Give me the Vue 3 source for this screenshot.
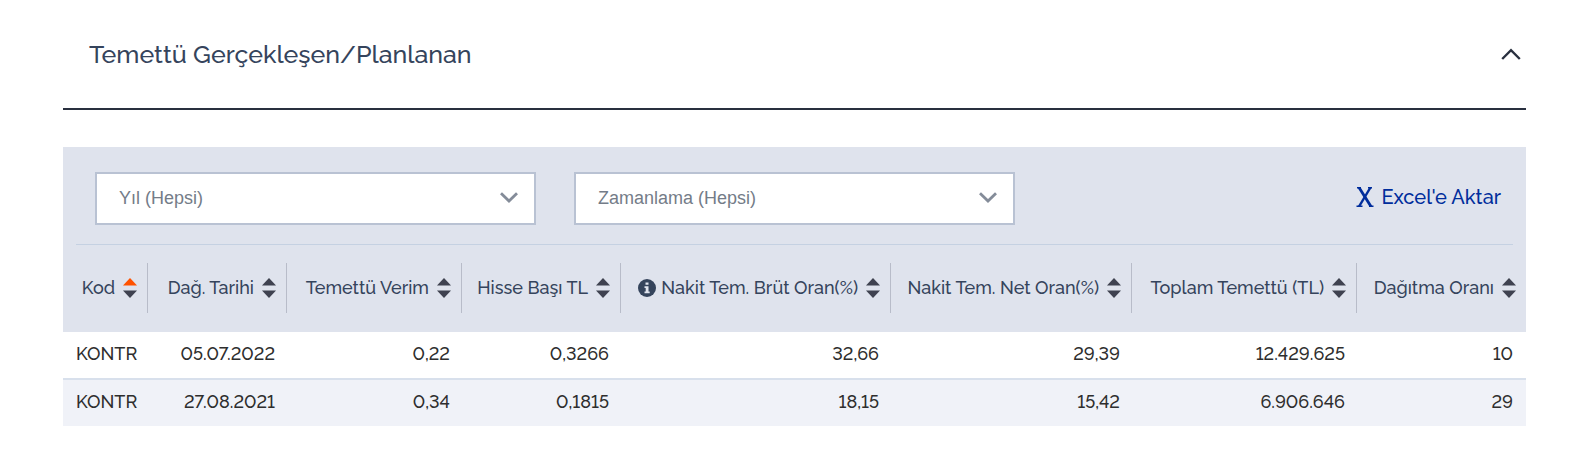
<script setup>
import { ref, computed } from 'vue'

const open = ref(true)
const year = ref('')
const timing = ref('')
const sortKey = ref('code')
const sortAsc = ref(true)

const columns = [
  { key: 'code', label: 'Kod' },
  { key: 'date', label: 'Dağ. Tarihi' },
  { key: 'yield', label: 'Temettü Verim' },
  { key: 'perShare', label: 'Hisse Başı TL' },
  { key: 'gross', label: 'Nakit Tem. Brüt Oran(%)', info: true },
  { key: 'net', label: 'Nakit Tem. Net Oran(%)' },
  { key: 'total', label: 'Toplam Temettü (TL)' },
  { key: 'payout', label: 'Dağıtma Oranı' },
]

const rows = [
  { code: 'KONTR', date: '05.07.2022', yield: '0,22', perShare: '0,3266', gross: '32,66', net: '29,39', total: '12.429.625', payout: '10' },
  { code: 'KONTR', date: '27.08.2021', yield: '0,34', perShare: '0,1815', gross: '18,15', net: '15,42', total: '6.906.646', payout: '29' },
]

function sortValue(row, key) {
  if (key === 'code') return row.code
  if (key === 'date') return row.date.split('.').reverse().join('')
  return Number(row[key].replaceAll('.', '').replace(',', '.'))
}

const visibleRows = computed(() => {
  const dir = sortAsc.value ? 1 : -1
  return rows
    .filter((r) => !year.value || r.date.endsWith(year.value))
    .sort((a, b) => {
      const x = sortValue(a, sortKey.value)
      const y = sortValue(b, sortKey.value)
      return x < y ? -dir : x > y ? dir : 0
    })
})

function sortBy(key) {
  sortAsc.value = sortKey.value === key ? !sortAsc.value : true
  sortKey.value = key
}
</script>

<template>
  <section class="card">
    <header class="card-head">
      <h2>Temettü Gerçekleşen/Planlanan</h2>
      <button class="toggle" type="button" aria-label="Daralt" :aria-expanded="open" @click="open = !open">
        <svg width="20" height="12" viewBox="0 0 20 12" :class="{ flipped: !open }">
          <path d="M1.200 11 10 2.200l8.800 8.800" fill="none" stroke="#29303f" stroke-width="2.400" />
        </svg>
      </button>
    </header>

    <div v-if="open" class="panel">
      <div class="filters">
        <div class="field">
          <select v-model="year" aria-label="Yıl">
            <option value="">Yıl (Hepsi)</option>
            <option>2022</option>
            <option>2021</option>
          </select>
          <svg class="caret" width="18" height="11" viewBox="0 0 18 11">
            <path d="M1 1.200 9 9l8-7.800" fill="none" stroke="#848c99" stroke-width="2.800" />
          </svg>
        </div>
        <div class="field">
          <select v-model="timing" aria-label="Zamanlama">
            <option value="">Zamanlama (Hepsi)</option>
            <option>Gerçekleşen</option>
            <option>Planlanan</option>
          </select>
          <svg class="caret" width="18" height="11" viewBox="0 0 18 11">
            <path d="M1 1.200 9 9l8-7.800" fill="none" stroke="#848c99" stroke-width="2.800" />
          </svg>
        </div>
        <a class="export" href="#">
          <svg width="18" height="20" viewBox="0 0 18 20">
            <path d="M1 .8h4M12 .8h4M.5 19.200h6M13 19.200h4.500" stroke="#002d9c" stroke-width="1.400" />
            <path d="M3 .5 15 19.500" stroke="#002d9c" stroke-width="2.800" />
            <path d="M14.500 .5 3 19.500" stroke="#002d9c" stroke-width="2.400" />
          </svg>
          <span>Excel'e Aktar</span>
        </a>
      </div>

      <table>
        <thead>
          <tr>
            <th v-for="c in columns" :key="c.key" scope="col">
              <button class="sort" type="button" @click="sortBy(c.key)">
                <svg v-if="c.info" class="info" width="18" height="18" viewBox="0 0 18 18">
                  <circle cx="9" cy="9" r="9" fill="#35445c" />
                  <path d="M7.500 3.500h3v2.300h-3zM6.500 7.200h4v5.300h1.200V14.300H6.500v-1.800h1.200V9H6.500z" fill="#e0e4ee" />
                </svg>
                <span>{{ c.label }}</span>
                <svg class="arrows" width="14" height="20" viewBox="0 0 14 20">
                  <path d="M7 0l7 7.500H0z" :fill="sortKey === c.key && sortAsc ? '#ff5200' : '#3f4250'" />
                  <path d="M0 12.500h14L7 20z" :fill="sortKey === c.key && !sortAsc ? '#ff5200' : '#3f4250'" />
                </svg>
              </button>
            </th>
          </tr>
        </thead>
        <tbody>
          <tr v-for="r in visibleRows" :key="r.date">
            <td v-for="c in columns" :key="c.key">{{ r[c.key] }}</td>
          </tr>
        </tbody>
      </table>
    </div>
  </section>
</template>

<style>
body {
  margin: 0;
  background: #fff;
}
</style>

<style scoped>
.card {
  margin: 0 45px 0 63px;
  font-family: Raleway, Lato, "Open Sans", sans-serif;
  font-variant-numeric: lining-nums;
  color: #35445c;
}

.card-head {
  display: flex;
  align-items: center;
  justify-content: space-between;
  height: 108px;
  padding: 0 5px 0 26px;
  border-bottom: 2px solid #29303f;
}

h2 {
  margin: 0;
  font-size: 25px;
  font-weight: 500;
  line-height: 36px;
}

button {
  padding: 0;
  border: 0;
  background: none;
  color: inherit;
  font: inherit;
  cursor: pointer;
}

.toggle {
  display: flex;
}

.flipped {
  transform: rotate(180deg);
}

.panel {
  margin-top: 37px;
  background: #dfe3ed;
}

.filters {
  display: flex;
  align-items: center;
  gap: 38px;
  margin: 0 13px;
  padding: 25px 12px 19px 19px;
  border-bottom: 1px solid #c5d1e2;
}

.field {
  position: relative;
  flex: 0 1 441px;
}

select {
  display: block;
  box-sizing: border-box;
  width: 100%;
  height: 53px;
  padding: 0 48px 2px 22px;
  border: 2px solid #b9c2d3;
  border-radius: 0;
  background: #fff;
  appearance: none;
  color: #747c88;
  font: 18px "Liberation Sans", sans-serif;
}

.caret {
  position: absolute;
  top: 20px;
  right: 18px;
  pointer-events: none;
}

.export {
  display: flex;
  align-items: center;
  gap: 7px;
  margin-left: auto;
  padding-bottom: 3px;
  color: #002d9c;
  font-size: 20px;
  font-weight: 500;
  text-decoration: none;
  white-space: nowrap;
}

table {
  width: 100%;
  border-collapse: separate;
  border-spacing: 0;
  table-layout: fixed;
  font-size: 18px;
}

th,
td {
  padding: 0 13px 0 0;
  font-weight: 500;
  text-align: right;
  white-space: nowrap;
}

th {
  height: 85px;
  padding: 0 0 2px;
}

th:nth-child(1) { width: 85px; }
th:nth-child(2) { width: 139px; }
th:nth-child(3) { width: 175px; }
th:nth-child(4) { width: 159px; }
th:nth-child(5) { width: 270px; }
th:nth-child(6) { width: 241px; }
th:nth-child(7) { width: 225px; }
th:nth-child(8) { width: 169px; }

.sort {
  display: flex;
  align-items: center;
  justify-content: flex-end;
  box-sizing: border-box;
  width: 100%;
  height: 50px;
  padding-right: 10px;
  border-right: 1px solid #b8bcc9;
}

th:last-child .sort {
  padding-right: 9px;
  border-right-color: transparent;
}

.arrows {
  flex: none;
  margin-left: 8px;
}

.info {
  flex: none;
  margin-right: 5px;
}

tbody tr {
  background: #fff;
  color: #2e2e2e;
}

td {
  height: 43px;
  padding-right: 12px;
  padding-bottom: 3px;
}

tbody tr:nth-child(even) {
  background: #f0f2f8;
}

tbody tr + tr td {
  border-top: 2px solid #d8e0ec;
}

td:first-child {
  padding-right: 0;
  padding-left: 13px;
  text-align: left;
}

td:last-child {
  padding-right: 13px;
}
</style>
